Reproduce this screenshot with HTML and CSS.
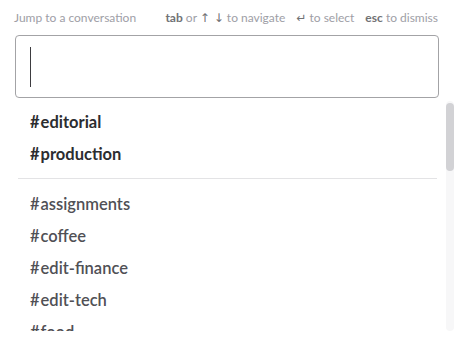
FILE: index.html
```html
<!DOCTYPE html>
<html>
<head>
<meta charset="utf-8">
<link rel="stylesheet" href="styles.css">
</head>
<body>
<div class="switcher">
  <div class="header">
    <span class="title">Jump to a conversation</span>
    <div class="hints">
      <span class="hint"><b>tab</b> or <span class="arr">↑ ↓</span> to navigate</span>
      <span class="hint"><span class="arr">↵</span> to select</span>
      <span class="hint"><b>esc</b> to dismiss</span>
    </div>
  </div>
  <div class="input"><span class="caret"></span></div>
  <div class="body">
    <div class="list">
      <div class="item unread"><span class="hash">#</span>editorial</div>
      <div class="item unread"><span class="hash">#</span>production</div>
      <div class="sep"></div>
      <div class="item"><span class="hash">#</span>assignments</div>
      <div class="item"><span class="hash">#</span>coffee</div>
      <div class="item"><span class="hash">#</span>edit-finance</div>
      <div class="item"><span class="hash">#</span>edit-tech</div>
      <div class="item"><span class="hash">#</span>food</div>
    </div>
    <div class="scrollbar"><div class="thumb"></div></div>
  </div>
</div>
</body>
</html>
```
FILE: styles.css
```css
html, body { margin: 0; padding: 0; background: #fff; }
body { font-family: Lato, "Noto Sans", sans-serif; width: 456px; height: 345px; overflow: hidden; }
.switcher { display: flex; flex-direction: column; }
.header {
  height: 35px; display: flex; align-items: center; justify-content: space-between;
  padding: 0 18px 0 14px; font-size: 12px; color: #9e9ea6;
}
.hints { display: flex; gap: 11px; }
.hint b { color: #717274; font-weight: 700; }
.arr { font-family: "DejaVu Sans", sans-serif; font-size: 12px; color: #717274; }
.input {
  margin: 0 17px 0 15px; height: 61px; border: 1px solid #a3a3a6; border-radius: 4px;
  display: flex; align-items: center; padding-left: 14px;
}
.caret { width: 1px; height: 40px; background: #3d3c40; }
.body { display: flex; height: 230px; margin-top: 3px; }
.list { flex: 1; overflow: hidden; padding-top: 5px; }
.item {
  height: 32px; display: flex; align-items: center; padding-left: 30px;
  font-size: 16.5px; color: #505055; font-weight: 600;
}
.item .hash { margin-right: 1px; }
.item.unread { color: #2c2d30; font-weight: 700; }
.sep { height: 1px; background: #e3e3e5; margin: 8px 9px 9px 18px; }
.scrollbar { width: 8px; margin-right: 2px; background: #f7f7f8; border-radius: 4px; }
.thumb { height: 68px; margin-top: 2px; background: #d2d2d5; border-radius: 4px; }
```
